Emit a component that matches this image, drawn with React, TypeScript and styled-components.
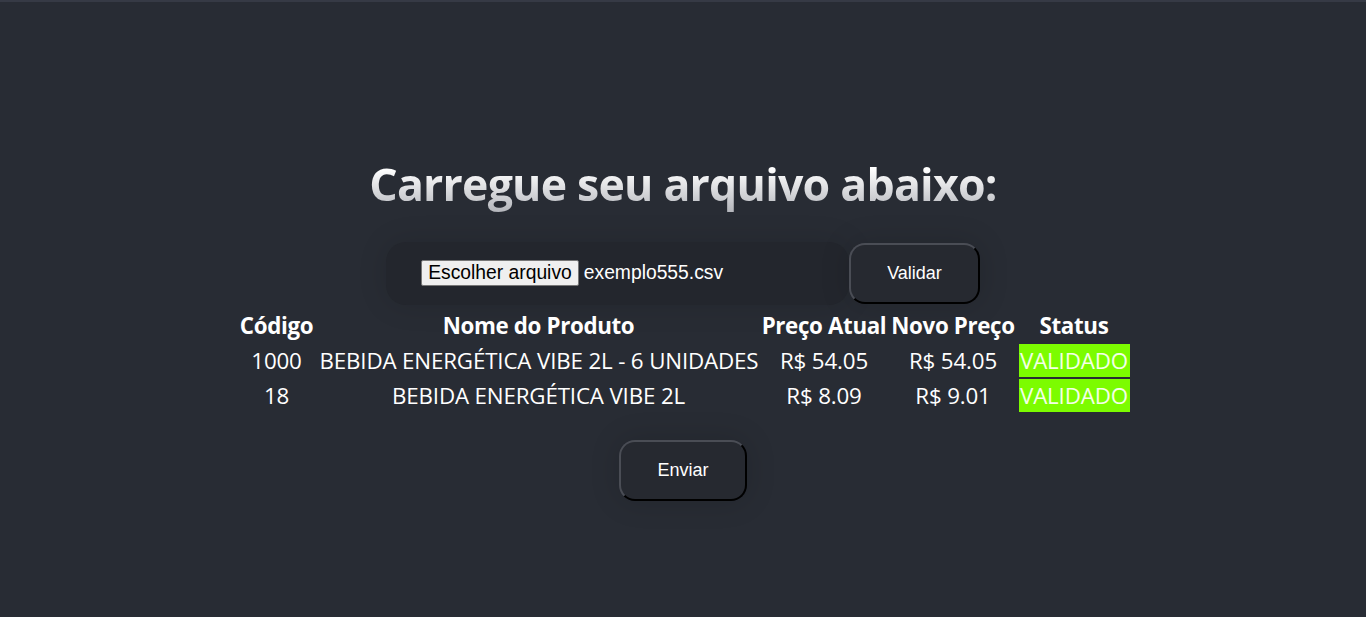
import React from "react";
import styled, { createGlobalStyle } from "styled-components";

const GlobalStyle = createGlobalStyle`
  html, body {
    margin: 0;
    padding: 0;
    background: #282c34;
  }
  body {
    border-top: 2px solid #363a45;
  }
`;

const Header = styled.header`
  min-height: calc(100vh - 2px);
  display: flex;
  flex-direction: column;
  align-items: center;
  justify-content: center;
  font-family: "Open Sans", "Noto Sans", sans-serif;
  font-size: 22.34px;
  color: #fff;
`;

const Title = styled.h1`
  margin: 35px 0 28px;
  font-size: 44.68px;
  line-height: 60px;
  font-weight: 700;
  letter-spacing: -0.8px;
  background: linear-gradient(180deg, #ffffff 25%, #b0b2b8 100%);
  -webkit-background-clip: text;
  background-clip: text;
  color: transparent;
`;

const Form = styled.form`
  display: flex;
  align-items: center;
`;

const FileBox = styled.div`
  display: flex;
  align-items: center;
  width: 463px;
  height: 63px;
  box-sizing: border-box;
  padding: 0 35px;
  background: #23262d;
  border-radius: 20px;
  box-shadow: 0 0 30px rgba(0, 0, 0, 0.12);
`;

const FileButton = styled.span`
  display: inline-block;
  padding: 1px 6px;
  background: #efefef;
  border: 1px solid #767676;
  border-radius: 2px;
  color: #000;
  font-family: "Liberation Sans", Arial, sans-serif;
  font-size: 19.3px;
  line-height: 22px;
`;

const FileName = styled.span`
  margin-left: 5px;
  color: #fff;
  font-family: "Liberation Sans", Arial, sans-serif;
  font-size: 19.3px;
`;

const ActionButton = styled.button`
  padding: 18px 36px;
  background: #262930;
  color: #fff;
  font-family: "Liberation Sans", Arial, sans-serif;
  font-size: 18px;
  line-height: 21px;
  border: 2px solid #000;
  border-top-color: #4a4d55;
  border-left-color: #4a4d55;
  border-radius: 16px;
  box-shadow: 0 0 30px rgba(0, 0, 0, 0.15);
  cursor: pointer;
`;

const Table = styled.table`
  width: 897px;
  margin-top: 3px;
  border-spacing: 2px;
  table-layout: fixed;
`;

const Th = styled.th<{ $w: number }>`
  width: ${(p) => p.$w}px;
  padding: 1px;
  font-weight: 700;
  white-space: nowrap;
  line-height: 30px;
  letter-spacing: -0.35px;
`;

const Td = styled.td<{ $ok?: boolean }>`
  padding: 1px;
  text-align: center;
  white-space: nowrap;
  line-height: 31px;
  letter-spacing: -0.15px;
  background: ${(p) => (p.$ok ? "#7cfc00" : "transparent")};
  color: ${(p) => (p.$ok ? "#f4ffe8" : "#fff")};
`;

const Footer = styled.div`
  margin-top: 26px;
`;

const rows = [
  { code: "1000", name: "BEBIDA ENERGÉTICA VIBE 2L - 6 UNIDADES", atual: "54.05", novo: "54.05", status: "VALIDADO" },
  { code: "18", name: "BEBIDA ENERGÉTICA VIBE 2L", atual: "8.09", novo: "9.01", status: "VALIDADO" },
];

export default function App() {
  return (
    <>
      <GlobalStyle />
      <Header>
        <Title>Carregue seu arquivo abaixo:</Title>
        <Form onSubmit={(e) => e.preventDefault()}>
          <FileBox>
            <FileButton>Escolher arquivo</FileButton>
            <FileName>exemplo555.csv</FileName>
          </FileBox>
          <ActionButton type="submit">Validar</ActionButton>
        </Form>
        <Table>
          <thead>
            <tr>
              <Th $w={78}>Código</Th>
              <Th $w={438}>Nome do Produto</Th>
              <Th $w={125}>Preço Atual</Th>
              <Th $w={125}>Novo Preço</Th>
              <Th $w={109}>Status</Th>
            </tr>
          </thead>
          <tbody>
            {rows.map((r) => (
              <tr key={r.code}>
                <Td>{r.code}</Td>
                <Td>{r.name}</Td>
                <Td>R$ {r.atual}</Td>
                <Td>R$ {r.novo}</Td>
                <Td $ok>{r.status}</Td>
              </tr>
            ))}
          </tbody>
        </Table>
        <Footer>
          <ActionButton type="button">Enviar</ActionButton>
        </Footer>
      </Header>
    </>
  );
}
